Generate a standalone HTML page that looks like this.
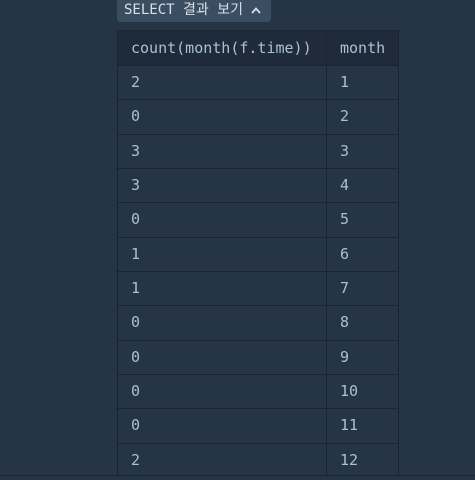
<!DOCTYPE html><html><head><style>
html,body{margin:0;padding:0;width:475px;height:480px;overflow:hidden;background:#263545;font-family:"DejaVu Sans Mono","Liberation Mono","Noto Sans CJK KR",monospace;}
.btn{position:absolute;left:117px;top:0;width:154px;height:22px;background:#3b4d61;border-radius:0 0 4px 4px;color:#d6e0ea;font-size:14px;line-height:21px;padding-left:7px;box-sizing:border-box;font-family:"DejaVu Sans Mono","Noto Sans CJK KR",monospace;}
.btn svg{position:absolute;left:134px;top:7px}
.tbl{position:absolute;left:117px;top:30px;width:282px;height:446px;border:1px solid #1a2533;border-bottom:none;box-sizing:border-box;}
.hdr{position:absolute;left:0;top:0;width:280px;height:34px;background:#1f2b3a;}
.vl{position:absolute;left:208px;top:0;width:1px;height:446px;background:#1a2533;}
.hl{position:absolute;left:0;width:280px;height:1px;background:#1a2533;}
.t{position:absolute;color:#a9c0d6;font-size:15px;line-height:18px;}
.bot{position:absolute;left:0;top:475px;width:475px;height:1px;background:#1a2533;}
</style></head><body>
<div class="btn">SELECT 결과 보기<svg width="10" height="7" viewBox="0 0 10 7"><path d="M1 6 L5 1.5 L9 6" stroke="#d6e0ea" stroke-width="1.8" fill="none"/></svg></div>
<div class="tbl">
<div class="hdr"></div>
<div class="vl"></div>
<div id="rows"></div>
</div>
<div class="bot"></div>
<script>
var d=[2,0,3,3,0,1,1,0,0,0,0,2],h='';
h+='<div class="t" style="left:13px;top:8px">count(month(f.time))</div><div class="t" style="left:222px;top:8px">month</div>';
for(var i=0;i<12;i++){var y=34+34.33*i;
h+='<div class="hl" style="top:'+Math.round(y)+'px"></div>';
h+='<div class="t" style="left:13px;top:'+Math.round(y+8)+'px">'+d[i]+'</div><div class="t" style="left:222px;top:'+Math.round(y+8)+'px">'+(i+1)+'</div>';}
document.getElementById('rows').innerHTML=h;
</script>
</body></html>
